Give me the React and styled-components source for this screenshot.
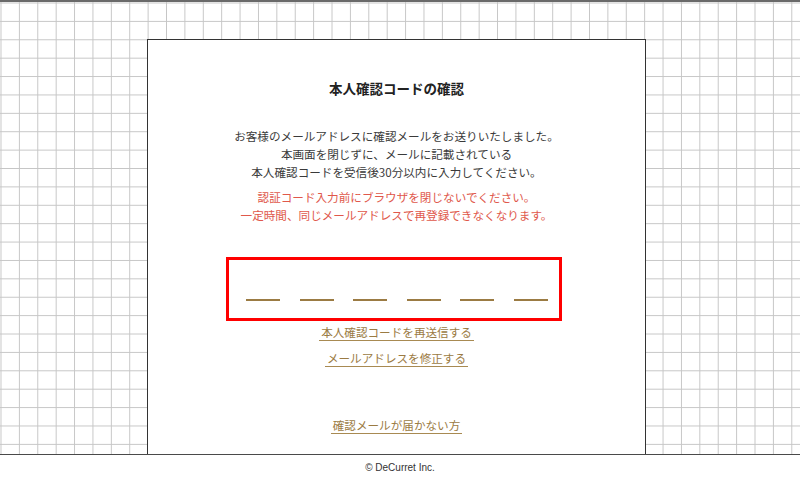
import React from "react";
import styled, { createGlobalStyle } from "styled-components";

const GlobalStyle = createGlobalStyle`
  html, body {
    margin: 0;
    padding: 0;
    background: #fff;
  }
  body {
    font-family: "Noto Sans CJK JP", "Liberation Sans", sans-serif;
    color: #333;
  }
`;

const Stage = styled.div`
  box-sizing: border-box;
  height: 455px;
  border-top: 2px solid #6a6a6a;
  border-bottom: 1px solid #4a4a4a;
  background-color: #fff;
  background-image: linear-gradient(to right, #c6c6c6 1px, transparent 1px),
    linear-gradient(to bottom, #c6c6c6 1px, transparent 1px);
  background-size: 18.4px 18.4px;
  background-position: 0.5px 0.5px;
  display: flex;
  justify-content: flex-start;
  overflow: hidden;
`;

const Card = styled.div`
  box-sizing: border-box;
  margin: 37px 0 0 147px;
  width: 499px;
  border: 1px solid #333;
  border-bottom: none;
  background: #fff;
  padding-top: 39px;
  display: flex;
  flex-direction: column;
  align-items: center;
`;

const Title = styled.h1`
  margin: 0;
  font-size: 13.5px;
  line-height: 18px;
  font-weight: bold;
  color: #222;
`;

const Lead = styled.p`
  margin: ${({ $top }) => $top}px 0 0;
  font-size: 11.6px;
  line-height: 18px;
  text-align: center;
  color: ${({ $warn }) => ($warn ? "#e0584b" : "#3a3a3a")};
`;

const CodeBox = styled.div`
  box-sizing: border-box;
  margin: 33px 5px 0 0;
  width: 336px;
  height: 64px;
  border: 3px solid #ff0000;
  padding: 0 11px 0 17px;
  display: flex;
  justify-content: space-between;
  align-items: flex-start;
`;

const Digit = styled.div`
  width: 34px;
  height: 39px;
  border-bottom: 2px solid #9b7b43;
`;

const TextLink = styled.a`
  margin-top: ${({ $top }) => $top}px;
  padding: 0 2px;
  font-size: 11.6px;
  line-height: 15px;
  color: #9b7b43;
  text-decoration: none;
  border-bottom: 1px solid #a88a52;
  cursor: pointer;
`;

const Footer = styled.footer`
  height: 24px;
  display: flex;
  align-items: center;
  justify-content: center;
  font-family: "Liberation Sans", Arial, sans-serif;
  font-size: 10px;
  color: #333;
`;

export default function App() {
  return (
    <>
      <GlobalStyle />
      <Stage>
        <Card>
          <Title>本人確認コードの確認</Title>
          <Lead $top={30}>
            お客様のメールアドレスに確認メールをお送りいたしました。
            <br />
            本画面を閉じずに、メールに記載されている
            <br />
            本人確認コードを受信後30分以内に入力してください。
          </Lead>
          <Lead $top={7} $warn>
            認証コード入力前にブラウザを閉じないでください。
            <br />
            一定時間、同じメールアドレスで再登録できなくなります。
          </Lead>
          <CodeBox>
            {[0, 1, 2, 3, 4, 5].map(i => (
              <Digit key={i} />
            ))}
          </CodeBox>
          <TextLink $top={4}>本人確認コードを再送信する</TextLink>
          <TextLink $top={10}>メールアドレスを修正する</TextLink>
          <TextLink $top={51}>確認メールが届かない方</TextLink>
        </Card>
      </Stage>
      <Footer>© DeCurret Inc.</Footer>
    </>
  );
}
